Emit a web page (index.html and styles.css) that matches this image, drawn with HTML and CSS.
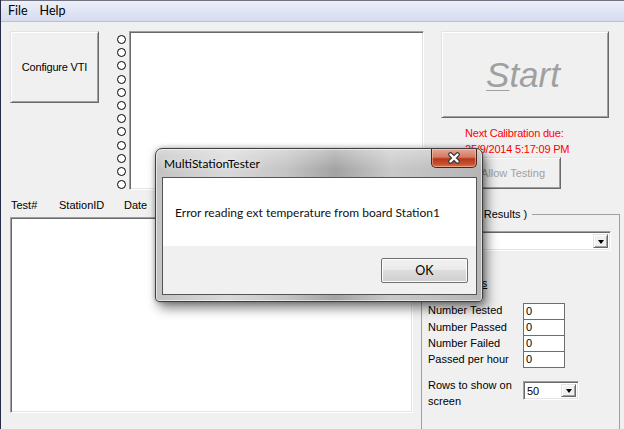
FILE: index.html
```html
<!DOCTYPE html>
<html lang="en">
<head>
    <meta charset="UTF-8">
    <title>MultiStationTester</title>
    <link rel="stylesheet" href="styles.css">
</head>
<body>
    <div class="window">
        <div class="menubar">
            <span class="menu-item">File</span>
            <span class="menu-item">Help</span>
        </div>

        <div class="form">
            <div class="row-top">
                <button class="btn configure">Configure VTI</button>

                <div class="radios">
                    <span class="radio"></span><span class="radio"></span><span class="radio"></span>
                    <span class="radio"></span><span class="radio"></span><span class="radio"></span>
                    <span class="radio"></span><span class="radio"></span><span class="radio"></span>
                    <span class="radio"></span><span class="radio"></span><span class="radio"></span>
                </div>

                <div class="listbox stations"></div>

                <div class="right-col">
                    <button class="btn start" disabled><u>S</u>tart</button>
                    <div class="calib">Next Calibration due:<br>25/9/2014 5:17:09 PM</div>
                    <button class="btn allow" disabled>Allow Testing</button>
                </div>
            </div>

            <div class="row-bottom">
                <div class="results">
                    <div class="headers">
                        <span class="col-test">Test#</span>
                        <span class="col-station">StationID</span>
                        <span class="col-date">Date</span>
                    </div>
                    <div class="listbox log"></div>
                </div>

                <fieldset class="group">
                    <legend>Test ( Last Results )</legend>
                    <div class="combo wide">
                        <span class="combo-value"></span>
                        <span class="combo-btn"><span class="arrow"></span></span>
                    </div>

                    <div class="stats-title">All Statistics</div>

                    <div class="stats">
                        <span class="stat-label">Number Tested</span><span class="stat-box">0</span>
                        <span class="stat-label">Number Passed</span><span class="stat-box">0</span>
                        <span class="stat-label">Number Failed</span><span class="stat-box">0</span>
                        <span class="stat-label">Passed per hour</span><span class="stat-box">0</span>
                    </div>

                    <div class="rows-show">
                        <span class="rows-label">Rows to show on screen</span>
                        <div class="combo small">
                            <span class="combo-value">50</span>
                            <span class="combo-btn"><span class="arrow"></span></span>
                        </div>
                    </div>
                </fieldset>
            </div>
        </div>

        <!-- message box over the main form -->
        <div class="dialog">
            <div class="dlg-title">MultiStationTester</div>
            <div class="dlg-close">
                <svg width="14" height="12" viewBox="0 0 14 12">
                    <path d="M3.5 2.5 L10.5 9.5 M10.5 2.5 L3.5 9.5" stroke="#3b3b3b" stroke-width="4.6" stroke-linecap="round"/>
                    <path d="M3.5 2.5 L10.5 9.5 M10.5 2.5 L3.5 9.5" stroke="#fff" stroke-width="2.4" stroke-linecap="round"/>
                </svg>
            </div>
            <div class="dlg-client">
                <div class="dlg-msg">Error reading ext temperature from board Station1</div>
                <div class="dlg-foot">
                    <button class="dlg-ok">OK</button>
                </div>
            </div>
        </div>
    </div>
</body>
</html>
```

FILE: styles.css
```css
body {
    margin: 0;
    background: #f0f0f0;
}

.window {
    position: relative;
    width: 623px;
    height: 429px;
    border-left: 1px solid #262b45;
    background: #f0f0f0;
    overflow: hidden;
    font-family: "Liberation Sans", Arial, sans-serif;
    font-size: 11px;
    color: #000;
}

/* menu */
.menubar {
    height: 20px;
    border-top: 1px solid #6f7282;
    border-bottom: 1px solid #b7bfd3;
    background: linear-gradient(#edf0f9, #dde3f3 60%, #d7ddef);
    display: flex;
    padding-left: 1px;
    font-family: Lato, "Noto Sans", sans-serif;
    font-size: 12.5px;
    line-height: 19px;
}

.menu-item {
    padding: 0 6px;
}

/* classic 3D controls */
.btn {
    background: #f0f0f0;
    border: 1px solid;
    border-color: #e3e3e3 #696969 #696969 #e3e3e3;
    box-shadow: inset 1px 1px #fff, inset -1px -1px #a0a0a0;
    font-family: "Liberation Sans", Arial, sans-serif;
    font-size: 11px;
    color: #000;
    padding: 0;
    margin: 0;
}

.btn:disabled {
    color: #a0a0a0;
}

.listbox {
    background: #fff;
    border: 1px solid;
    border-color: #a0a0a0 #fff #fff #a0a0a0;
    box-shadow: inset 1px 1px #696969, inset -1px -1px #e3e3e3;
    box-sizing: border-box;
}

.form {
    padding-top: 9px;
}

.row-top {
    display: flex;
    align-items: flex-start;
    height: 160px;
    padding-left: 9px;
}

.configure {
    width: 89px;
    height: 72px;
    letter-spacing: -0.2px;
}

.radios {
    display: flex;
    flex-direction: column;
    gap: 4.2px;
    margin: 4px 0 0 18px;
    width: 12px;
}

.radio {
    width: 7px;
    height: 7px;
    border: 1px solid #000;
    border-radius: 50%;
    background: #fff;
}

.stations {
    width: 295px;
    height: 159px;
}

.right-col {
    margin-left: 17px;
    width: 168px;
}

.start {
    display: block;
    width: 168px;
    height: 87px;
    font-size: 35px;
    font-style: italic;
    padding-right: 4px;
    color: #9c9c9c;
}

.start u {
    text-underline-offset: 3px;
    text-decoration-thickness: 1px;
}

.calib {
    margin: 7px 0 0 24px;
    color: #f00;
    font-size: 11px;
    line-height: 16px;
    letter-spacing: -0.2px;
}

.allow {
    display: block;
    margin-left: 24px;
    width: 96px;
    height: 32px;
}

/* lower part */
.row-bottom {
    display: flex;
    align-items: flex-start;
    padding-left: 9px;
}

.headers {
    height: 26px;
    box-sizing: border-box;
    padding: 7px 0 0 1px;
    line-height: 14px;
    display: flex;
    white-space: nowrap;
}

.col-test { width: 48px; }
.col-station { width: 65px; }

.log {
    width: 403px;
    height: 196px;
}

.group {
    margin: 16px 0 0 8px;
    padding: 0 0 0 6px;
    width: 199px;
    height: 260px;
    box-sizing: border-box;
    border: 1px solid #a0a0a0;
    min-width: 0;
}

.group legend {
    padding: 0 5px 0 1px;
    margin-left: 1px;
    line-height: 14px;
}

.combo {
    display: flex;
    background: #fff;
    border: 1px solid;
    border-color: #a0a0a0 #fff #fff #a0a0a0;
    box-shadow: inset 1px 1px #696969, inset -1px -1px #e3e3e3;
    box-sizing: border-box;
    padding: 2px;
}

.combo.wide {
    margin-top: 10px;
    width: 183px;
    height: 20px;
}

.combo.small {
    margin-top: 4px;
    width: 56px;
    height: 19px;
}

.combo-value {
    flex: 1;
    line-height: 14px;
    padding-left: 1px;
}

.combo-btn {
    width: 15px;
    background: #f0f0f0;
    border: 1px solid;
    border-color: #e3e3e3 #696969 #696969 #e3e3e3;
    box-shadow: inset 1px 1px #fff, inset -1px -1px #a0a0a0;
    box-sizing: border-box;
    display: flex;
    align-items: center;
    justify-content: center;
}

.arrow {
    width: 0;
    height: 0;
    border-left: 3.5px solid transparent;
    border-right: 3.5px solid transparent;
    border-top: 4px solid #000;
    margin-top: 1px;
}

.stats-title {
    margin-top: 25px;
    line-height: 14px;
    text-decoration: underline;
}

.stats {
    display: grid;
    grid-template-columns: 95px 42px;
    margin-top: 13px;
}

.stat-label {
    line-height: 15px;
}

.stat-box {
    background: #fff;
    border: 1px solid #6e6e6e;
    height: 15px;
    line-height: 15px;
    padding-left: 2px;
    margin-top: -1px;
}

.stat-box:nth-child(2) {
    margin-top: 0;
}

.rows-show {
    display: flex;
    align-items: flex-start;
    margin-top: 9px;
}

.rows-label {
    width: 95px;
    line-height: 16px;
}

/* message box */
.dialog {
    position: absolute;
    left: 154px;
    top: 148px;
    width: 315px;
    height: 147px;
    padding: 0 5px 5px 6px;
    border: 1px solid #3f3f3f;
    border-radius: 7px 7px 4px 4px;
    background:
        linear-gradient(rgba(255, 255, 255, 0.35), rgba(255, 255, 255, 0) 20px),
        linear-gradient(90deg, #c3c3c3 0%, #d9d9d9 22%, #c4c4c4 40%, #a3a3a3 55%, #c9c9c9 72%, #b5b5b5 100%);
    box-shadow: inset 0 0 0 1px rgba(255, 255, 255, 0.55), 4px 6px 12px rgba(0, 0, 0, 0.5), 0 0 5px rgba(0, 0, 0, 0.3);
    font-family: Lato, "Noto Sans", sans-serif;
    font-size: 12px;
}

.dlg-title {
    height: 28px;
    line-height: 30px;
    padding-left: 2px;
    text-shadow: 0 0 6px rgba(255, 255, 255, 0.9);
}

.dlg-close {
    position: absolute;
    top: 0;
    right: 5px;
    width: 44px;
    height: 18px;
    border: 1px solid #4f2219;
    border-top: none;
    border-radius: 0 0 5px 5px;
    background: linear-gradient(#e7a796, #d47a62 45%, #b8371c 55%, #c85230 85%, #da7a52);
    box-shadow: inset 0 0 0 1px rgba(255, 220, 200, 0.45);
    display: flex;
    align-items: center;
    justify-content: center;
}

.dlg-client {
    border: 1px solid #545454;
    background: #f0f0f0;
}

.dlg-msg {
    background: #fff;
    height: 68px;
    box-sizing: border-box;
    padding: 27px 0 0 12px;
    line-height: 16px;
    color: #111;
}

.dlg-foot {
    height: 48px;
    display: flex;
    justify-content: flex-end;
    align-items: flex-start;
}

.dlg-ok {
    margin: 12px 8px 0 0;
    width: 87px;
    height: 25px;
    border: 1px solid #707070;
    border-radius: 2px;
    background: linear-gradient(#f2f2f2, #ebebeb 45%, #dddddd 50%, #cfcfcf);
    box-shadow: inset 0 0 0 1px #fcfcfc;
    font-family: Lato, "Noto Sans", sans-serif;
    font-size: 12.5px;
    color: #000;
    padding: 0;
}
```
